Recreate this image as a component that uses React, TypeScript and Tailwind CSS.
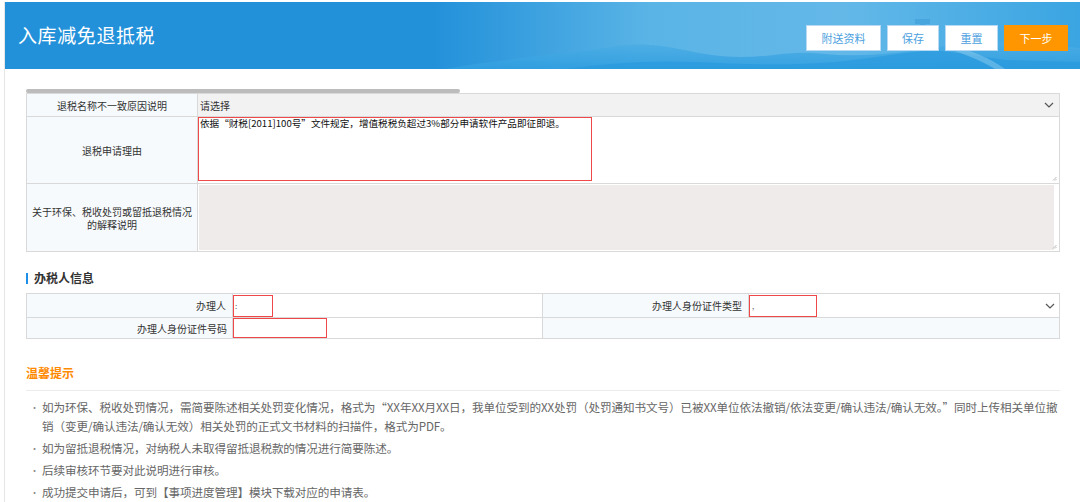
import React from "react";

const FONT = { fontFamily: '"Noto Sans CJK SC", "Noto Sans", sans-serif' };

function Chevron() {
  return (
    <svg width="10" height="6" viewBox="0 0 10 6" className="shrink-0">
      <path d="M1 1 L5 5 L9 1" fill="none" stroke="#555" strokeWidth="1.2" />
    </svg>
  );
}

function Grip() {
  return (
    <svg width="5" height="5" viewBox="0 0 5 5" className="absolute right-[2px] bottom-[2px]">
      <path d="M4.5 1 L1 4.5 M4.5 3 L3 4.5" stroke="#aaa" strokeWidth="0.8" />
    </svg>
  );
}

function HeaderArt() {
  return (
    <svg
      className="absolute inset-0 w-full h-full pointer-events-none"
      viewBox="0 0 1075 67"
      preserveAspectRatio="none"
    >
      <defs>
        <linearGradient id="sky" x1="0" x2="1" y1="0" y2="0">
          <stop offset="0" stopColor="#2391da" />
          <stop offset="0.4" stopColor="#2391da" />
          <stop offset="0.6" stopColor="#5ab4e6" />
          <stop offset="0.78" stopColor="#63b8e8" />
          <stop offset="1" stopColor="#3aa5e2" />
        </linearGradient>
        <linearGradient id="hill" x1="0" x2="0" y1="0" y2="1">
          <stop offset="0" stopColor="#4eaee4" />
          <stop offset="1" stopColor="#2f9ee0" />
        </linearGradient>
      </defs>
      <rect x="0" y="0" width="1075" height="67" fill="url(#sky)" />
      <path
        d="M440 67 L470 62 C520 56 560 50 600 46 C630 40 650 42 680 48 C710 55 730 56 760 54 C790 50 800 50 820 52 C860 56 900 50 940 44 L1000 40 L1075 46 L1075 67 Z"
        fill="url(#hill)"
        opacity="0.85"
      />
      <path
        d="M560 67 C600 62 640 58 690 60 C740 62 780 64 830 60 C870 56 900 50 930 48 L960 52 L1000 58 L1075 60 L1075 67 Z"
        fill="#2a9ade"
        opacity="0.7"
      />
      <path d="M910 17 L925 17 L925 22 L920 22 L920 40 L915 40 L915 22 L910 22 Z" fill="#3a9ad6" opacity="0.5" />
      <path d="M940 46 C960 52 975 58 990 67 L1000 67 C985 56 965 48 945 42 Z" fill="#8ccbee" opacity="0.5" />
    </svg>
  );
}

export default function App() {
  const hints = [
    "如为环保、税收处罚情况，需简要陈述相关处罚变化情况，格式为“XX年XX月XX日，我单位受到的XX处罚（处罚通知书文号）已被XX单位依法撤销/依法变更/确认违法/确认无效。”同时上传相关单位撤销（变更/确认违法/确认无效）相关处罚的正式文书材料的扫描件，格式为PDF。",
    "如为留抵退税情况，对纳税人未取得留抵退税款的情况进行简要陈述。",
    "后续审核环节要对此说明进行审核。",
    "成功提交申请后，可到【事项进度管理】模块下载对应的申请表。",
  ];

  return (
    <div className="w-[1080px] h-[502px] overflow-hidden bg-white pt-[2px] pl-[4px]" style={FONT}>
      <div className="h-full border-l border-[#e6e6e6]">
        {/* header */}
        <div className="relative h-[67px] flex items-center justify-between">
          <HeaderArt />
          <div className="relative pl-[13px] text-[19px] tracking-[0.6px] text-white">入库减免退抵税</div>
          <div className="relative flex items-center gap-[6px] mr-[12px] mt-[5px]">
            <button className="w-[75px] h-[26px] bg-white border border-[#b7d9f3] text-[11px] text-[#4c9fe0]">附送资料</button>
            <button className="w-[52px] h-[26px] bg-white border border-[#b7d9f3] text-[11px] text-[#4c9fe0]">保存</button>
            <button className="w-[53px] h-[26px] bg-white border border-[#b7d9f3] text-[11px] text-[#4c9fe0]">重置</button>
            <button className="w-[64px] h-[26px] bg-[#ff9600] text-[11px] text-white">下一步</button>
          </div>
        </div>

        {/* body */}
        <div className="pl-[21px] pr-[20px] pt-[20px]">
          {/* scroll bar */}
          <div className="w-[434px] h-[4px] rounded-full bg-[#bcbcbc]" />

          {/* table 1 */}
          <div className="border border-[#d9d9d9] text-[10px] text-[#333]">
            <div className="flex h-[22px]">
              <div className="w-[171px] shrink-0 bg-[#f7fafc] border-r border-[#d9d9d9] flex items-center justify-center">
                退税名称不一致原因说明
              </div>
              <div className="flex-1 bg-[#f2f2f2] flex items-center justify-between pl-[2px] pr-[5px]">
                <span>请选择</span>
                <Chevron />
              </div>
            </div>
            <div className="flex h-[67px] border-t border-[#d9d9d9]">
              <div className="w-[171px] shrink-0 bg-[#f7fafc] border-r border-[#d9d9d9] flex items-center justify-center">
                退税申请理由
              </div>
              <div className="relative flex-1 bg-white">
                <div className="w-[394px] h-[64px] border border-[#f04848] leading-[11px] text-[9.6px] text-[#111] pl-[1px]">
                  依据“财税[2011]100号”文件规定，增值税税负超过3%部分申请软件产品即征即退。
                </div>
                <Grip />
              </div>
            </div>
            <div className="flex h-[68px] border-t border-[#d9d9d9]">
              <div className="w-[171px] shrink-0 bg-[#f7fafc] border-r border-[#d9d9d9] flex items-center justify-center text-center leading-[13px] px-[4px]">
                关于环保、税收处罚或留抵退税情况
                <br />
                的解释说明
              </div>
              <div className="relative flex-1 bg-white flex py-[1px] pl-[1px] pr-[5px]">
                <div className="flex-1 bg-[#efebeb]" />
                <Grip />
              </div>
            </div>
          </div>

          {/* section title */}
          <div className="mt-[20px] flex items-center h-[12px]">
            <div className="w-[2px] h-[11px] bg-[#1e8fe8]" />
            <div className="ml-[6px] text-[12px] font-bold text-[#333]">办税人信息</div>
          </div>

          {/* table 2 */}
          <div className="mt-[9px] border border-[#d9d9d9] text-[10px] text-[#333]">
            <div className="flex h-[23px]">
              <div className="w-[206px] shrink-0 bg-[#f7fafc] border-r border-[#d9d9d9] flex items-center justify-end pr-[6px]">
                办理人
              </div>
              <div className="w-[310px] shrink-0 bg-white border-r border-[#d9d9d9] flex items-center">
                <div className="w-[40px] h-[22px] border border-[#f04848] flex items-center text-[#666] text-[8px] pl-[1px]">:</div>
              </div>
              <div className="w-[206px] shrink-0 bg-[#f7fafc] border-r border-[#d9d9d9] flex items-center justify-end pr-[6px]">
                办理人身份证件类型
              </div>
              <div className="flex-1 bg-white flex items-center justify-between pr-[4px]">
                <div className="w-[68px] h-[22px] border border-[#f04848] flex items-end pb-[4px] pl-[2px] text-[8px] text-[#666]">,</div>
                <Chevron />
              </div>
            </div>
            <div className="flex h-[21px] border-t border-[#d9d9d9]">
              <div className="w-[206px] shrink-0 bg-[#f7fafc] border-r border-[#d9d9d9] flex items-center justify-end pr-[5px]">
                办理人身份证件号码
              </div>
              <div className="w-[310px] shrink-0 bg-white border-r border-[#d9d9d9] flex items-center">
                <div className="w-[94px] h-[20px] border border-[#f04848]" />
              </div>
              <div className="flex-1 bg-[#f7fafc]" />
            </div>
          </div>

          {/* hints */}
          <div className="mt-[27px] text-[12px] font-bold text-[#ff8a00] leading-[14px]">温馨提示</div>
          <div className="mt-[10px] border-t border-[#ececec]" />
          <ul className="mt-[7px] text-[11.6px] tracking-[-0.1px] text-[#666] leading-[19px] flex flex-col gap-[3px]">
            {hints.map((h, i) => (
              <li key={i} className="flex">
                <span className="w-[16px] shrink-0 pl-[4px] text-[9px] text-[#888]">•</span>
                <span>{h}</span>
              </li>
            ))}
          </ul>
        </div>
      </div>
    </div>
  );
}
